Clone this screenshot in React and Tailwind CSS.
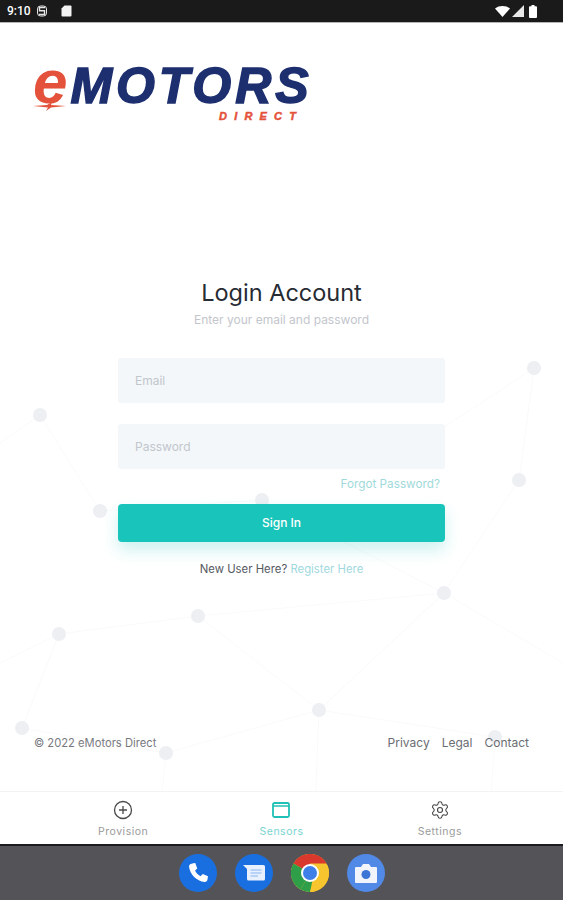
import { Settings } from 'lucide-react';

const dots = [
    [534, 345], [40, 392], [519, 457], [100, 488], [262, 477], [444, 570], [198, 593],
    [59, 611], [319, 687], [22, 705], [166, 730], [495, 714],
];

const links = [
    [0, 420, 40, 392], [40, 392, 100, 488], [100, 488, 262, 477], [262, 477, 444, 570], [444, 570, 519, 457],
    [519, 457, 534, 345], [534, 345, 420, 420], [198, 593, 444, 570], [0, 640, 59, 611], [59, 611, 198, 593],
    [59, 611, 22, 705], [22, 705, 166, 730], [166, 730, 319, 687], [319, 687, 444, 570], [319, 687, 495, 714],
    [198, 593, 319, 687], [444, 570, 563, 640], [166, 730, 160, 790], [319, 687, 315, 790], [495, 714, 490, 790],
];

const NetworkBackground = () => (
    <svg className="absolute inset-0 h-full w-full" viewBox="0 0 563 768" preserveAspectRatio="none">
        {links.map(([x1, y1, x2, y2], i) => (
            <line key={i} x1={x1} y1={y1} x2={x2} y2={y2} stroke="#fafafb" strokeWidth="1" />
        ))}
        {dots.map(([cx, cy], i) => (
            <circle key={i} cx={cx} cy={cy} r="7" fill="#edeff3" />
        ))}
    </svg>
);

const StatusBar = () => (
    <div className="flex h-[22px] items-center justify-between bg-[#1a1a1a] pl-[7px] pr-[26px] text-white">
        <div className="flex items-center">
            <span className="text-[12px] font-medium font-['Roboto',sans-serif]">9:10</span>
            <svg className="ml-[5px]" width="12" height="12" viewBox="0 0 12 12" fill="none" stroke="#e5e5e5" strokeWidth="1.4">
                <path d="M9 2.5H3.5v3.2h5v3.8H3" />
                <rect x="1.5" y="1" width="9" height="10" rx="3" strokeWidth="1" />
            </svg>
            <svg className="ml-[13px]" width="11" height="12" viewBox="0 0 11 12" fill="#f2f2f2">
                <path d="M3.5 0.5H9.5a1 1 0 0 1 1 1v9a1 1 0 0 1-1 1H1.5a1 1 0 0 1-1-1V3.5z" />
            </svg>
        </div>
        <div className="flex items-center gap-[1px]">
            <svg width="15" height="11" viewBox="0 0 15 11" fill="white">
                <path d="M0 2.5C4 -0.8 11 -0.8 15 2.5L7.5 11z" />
            </svg>
            <svg width="13" height="12" viewBox="0 0 13 12" fill="#e8e8e8">
                <path d="M13 0V12H1z" />
            </svg>
            <svg className="ml-[4px]" width="8" height="13" viewBox="0 0 8 13" fill="white">
                <path d="M2.5 0h3v1.2H7a1 1 0 0 1 1 1V12a1 1 0 0 1-1 1H1a1 1 0 0 1-1-1V2.2a1 1 0 0 1 1-1h1.500z" />
            </svg>
        </div>
    </div>
);

const Logo = () => (
    <div className="relative ml-[33px] mt-[33px] h-[68px] w-[280px] italic font-['Liberation_Sans',sans-serif] font-bold">
        <div className="flex items-baseline leading-[52px]">
            <span className="text-[62px] tracking-[-1px] text-[#e4523b]">e</span>
            <span className="ml-[4px] text-[50px] tracking-[3.900px] text-[#1d2f6f] [-webkit-text-stroke:1.500px_#1d2f6f]">MOTORS</span>
        </div>
        <svg className="absolute left-0 top-[46px]" width="34" height="9" viewBox="0 0 34 9" fill="#e4523b">
            <path d="M0 4L14 3 19 0 18 3 33 4 18 5.500 13 9 15 5.500z" />
        </svg>
        <div className="absolute left-[186px] top-[53px] text-[11px] leading-[14px] tracking-[7.200px] text-[#e4523b] [-webkit-text-stroke:0.500px_#e4523b]">DIRECT</div>
    </div>
);

const LoginForm = () => (
    <div className="mx-auto mt-[154px] flex w-[327px] flex-col items-center">
        <h1 className="text-[23.500px] leading-[30px] font-normal text-[#272b33]">Login Account</h1>
        <p className="mt-[4px] text-[12px] leading-[16px] text-[#c3c6cc]">Enter your email and password</p>
        <input
            placeholder="Email"
            className="mt-[30px] h-[45px] w-full rounded-[3px] bg-[#f3f7fa] px-[17px] text-[12px] outline-none placeholder:text-[#c2c6cb]"
        />
        <input
            placeholder="Password"
            className="mt-[21px] h-[45px] w-full rounded-[3px] bg-[#f3f7fa] px-[17px] text-[12px] outline-none placeholder:text-[#c2c6cb]"
        />
        <a className="mt-[7px] self-end pr-[5px] text-[11.750px] leading-[16px] text-[#9fdadb]">Forgot Password?</a>
        <button className="mt-[12px] h-[38px] w-full rounded-[4px] bg-[#19c5bb] text-[12px] font-medium text-white shadow-[0_8px_16px_rgba(25,197,187,0.22)]">
            Sign In
        </button>
        <p className="mt-[19px] text-[11.350px] leading-[16px] text-[#555a62]">
            New User Here? <a className="text-[#9fd9e0]">Register Here</a>
        </p>
    </div>
);

const Footer = () => (
    <div className="mt-auto mb-[40px] flex items-center justify-between px-[34px] text-[11.200px] leading-[16px] text-[#77797f]">
        <span>© 2022 eMotors Direct</span>
        <div className="flex gap-[12px] text-[12px] text-[#6b6d73]">
            <a>Privacy</a>
            <a>Legal</a>
            <a>Contact</a>
        </div>
    </div>
);

const BottomNav = () => (
    <div className="relative grid h-[53px] grid-cols-3 border-t border-[#f3f3f3] bg-white px-[44px] text-[10.500px] tracking-[0.5px] text-[#9b9b9b]">
        <div className="flex flex-col items-center pt-[8px]">
            <svg width="20" height="20" viewBox="0 0 20 20" fill="none" stroke="#4a4a4a" strokeWidth="1.300">
                <circle cx="10" cy="10" r="8.500" />
                <path d="M10 6v8M6 10h8" />
            </svg>
            <span className="mt-[5px] leading-[14px]">Provision</span>
        </div>
        <div className="flex flex-col items-center pt-[8px] text-[#78d4cf]">
            <svg width="20" height="20" viewBox="0 0 20 20" fill="none" stroke="#1fc0b6">
                <rect x="2" y="3" width="16" height="14" rx="1.500" strokeWidth="1.800" />
                <path d="M2 6h16" strokeWidth="1.500" />
            </svg>
            <span className="mt-[5px] leading-[14px]">Sensors</span>
        </div>
        <div className="flex flex-col items-center pt-[8px]">
            <Settings size={20} strokeWidth={1.300} color="#444444" />
            <span className="mt-[5px] leading-[14px]">Settings</span>
        </div>
    </div>
);

const DockCircle = ({ bg, children }) => (
    <div className={`flex h-[38px] w-[38px] items-center justify-center rounded-full ${bg}`}>{children}</div>
);

const Dock = () => (
    <div className="flex h-[56px] items-center justify-center gap-[18px] border-t-2 border-[#1c1c1e] bg-[#545458]">
        <DockCircle bg="bg-[#1a6fe0]">
            <svg width="26" height="26" viewBox="0 0 24 24" fill="white">
                <path d="M6.600 3.200 9.500 2.700 11.300 7.800 9.300 9.800C10.200 12 12 13.900 14.300 15L16.400 13 21.200 14.900 20.700 18.300C20.400 19.700 19.400 20.500 18 20.300 10.800 19.500 4.600 13.400 3.700 6 3.600 4.700 5 3.500 6.600 3.200z" />
            </svg>
        </DockCircle>
        <DockCircle bg="bg-[#1a6fe0]">
            <svg width="26" height="24" viewBox="0 0 26 24">
                <path d="M2 4H22.500A1.500 1.500 0 0 1 24 5.500V18A1.500 1.500 0 0 1 22.500 19.500H7.500A1.500 1.500 0 0 1 6 18V8z" fill="#e8f0fd" />
                <path d="M9.500 9H20.500M9.500 12H20.500M9.500 15H17" stroke="#a9c8f5" strokeWidth="1.500" />
            </svg>
        </DockCircle>
        <svg width="38" height="38" viewBox="0 0 38 38">
            <circle cx="19" cy="19" r="19" fill="#f7c52e" />
            <path d="M19 19 2.500 9.500A19 19 0 0 1 35.500 9.500H19z" fill="#d8392c" />
            <path d="M19 19 9.500 35.500A19 19 0 0 1 2.500 9.500z" fill="#2f9e48" />
            <path d="M19 19 28.500 19 19 38A19 19 0 0 1 9.500 35.500z" fill="#2f9e48" />
            <path d="M23 19 19 38A19 19 0 0 0 36 10.500H19z" fill="#f7c52e" />
            <circle cx="19" cy="19" r="9" fill="white" />
            <circle cx="19" cy="19" r="7" fill="#3f7fe8" />
        </svg>
        <DockCircle bg="bg-[#5189e6]">
            <svg width="24" height="22" viewBox="0 0 24 22">
                <path d="M2 5H7L9 2H15L17 5H22A1 1 0 0 1 23 6V20A1 1 0 0 1 22 21H2A1 1 0 0 1 1 20V6A1 1 0 0 1 2 5z" fill="#f1f4fb" />
                <circle cx="12" cy="12.500" r="4.500" fill="#3c75d6" />
            </svg>
        </DockCircle>
    </div>
);

export default function App() {
    return (
        <div className="flex h-[900px] w-[563px] flex-col overflow-hidden bg-white font-['Inter',sans-serif]">
            <StatusBar />
            <div className="h-[1px] bg-[#b5b5b5]" />
            <main className="relative flex flex-1 flex-col">
                <NetworkBackground />
                <div className="relative flex flex-1 flex-col">
                    <Logo />
                    <LoginForm />
                    <Footer />
                </div>
            </main>
            <BottomNav />
            <Dock />
        </div>
    );
}
